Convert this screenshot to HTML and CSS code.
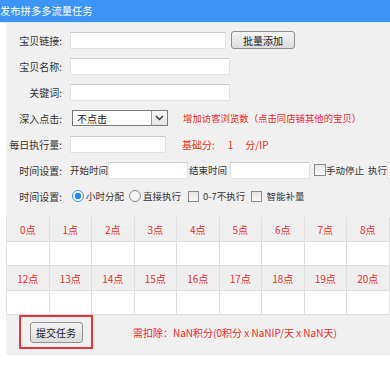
FILE: index.html
```html
<!DOCTYPE html>
<html lang="zh-CN">
<head>
    <meta charset="UTF-8">
    <meta name="viewport" content="width=device-width, initial-scale=1.0">
    <title>发布拼多多流量任务</title>
    <link rel="stylesheet" href="styles.css">
</head>
<body>
    <div class="page">
        <header class="title">发布拼多多流量任务</header>

        <div class="panel">
            <!-- 宝贝信息 -->
            <div class="row">
                <label class="lbl">宝贝链接:</label>
                <input type="text" class="txt w-link">
                <button type="button" class="btn btn-add">批量添加</button>
            </div>
            <div class="row">
                <label class="lbl">宝贝名称:</label>
                <input type="text" class="txt w-long">
            </div>
            <div class="row">
                <label class="lbl">关键词:</label>
                <input type="text" class="txt w-long">
            </div>

            <!-- 深入点击 -->
            <div class="row">
                <label class="lbl">深入点击:</label>
                <div class="select">
                    <span class="select-val">不点击</span>
                    <span class="select-arrow">
                        <svg width="9" height="6" viewBox="0 0 9 6"><path d="M1 1 L4.5 4.5 L8 1" fill="none" stroke="#333" stroke-width="1.4"/></svg>
                    </span>
                </div>
                <span class="red tip">增加访客浏览数（点击同店铺其他的宝贝）</span>
            </div>

            <!-- 执行量 -->
            <div class="row">
                <label class="lbl">每日执行量:</label>
                <input type="text" class="txt w-short">
                <span class="red score">基础分:<b>1</b>分/IP</span>
            </div>

            <!-- 时间 -->
            <div class="row">
                <label class="lbl">时间设置:</label>
                <span class="txt-in">开始时间</span>
                <input type="text" class="txt w-time">
                <span class="txt-in end-lbl">结束时间</span>
                <input type="text" class="txt w-time end">
                <span class="chk"></span>
                <span class="txt-in">手动停止</span>
                <span class="txt-in run">执行</span>
                <input type="text" class="txt w-run">
            </div>
            <div class="row">
                <label class="lbl">时间设置:</label>
                <span class="radio on first"></span><span class="opt">小时分配</span>
                <span class="radio"></span><span class="opt">直接执行</span>
                <span class="chk small"></span><span class="opt">0-7不执行</span>
                <span class="chk small"></span><span class="opt">智能补量</span>
            </div>

            <!-- 小时分配 -->
            <table class="hours">
                <tr class="head">
                    <td>0点</td><td>1点</td><td>2点</td><td>3点</td><td>4点</td><td>5点</td>
                    <td>6点</td><td>7点</td><td>8点</td><td>9点</td><td>10点</td><td>11点</td>
                </tr>
                <tr class="vals">
                    <td></td><td></td><td></td><td></td><td></td><td></td>
                    <td></td><td></td><td></td><td></td><td></td><td></td>
                </tr>
                <tr class="head">
                    <td>12点</td><td>13点</td><td>14点</td><td>15点</td><td>16点</td><td>17点</td>
                    <td>18点</td><td>19点</td><td>20点</td><td>21点</td><td>22点</td><td>23点</td>
                </tr>
                <tr class="vals">
                    <td></td><td></td><td></td><td></td><td></td><td></td>
                    <td></td><td></td><td></td><td></td><td></td><td></td>
                </tr>
            </table>

            <!-- 提交 -->
            <div class="submit-row">
                <div class="submit-box">
                    <button type="button" class="btn btn-submit">提交任务</button>
                </div>
                <span class="red cost">需扣除：NaN积分(0积分 x NaNIP/天 x NaN天)</span>
            </div>
        </div>
    </div>
</body>
</html>
```

FILE: styles.css
```css
body {
    margin: 0;
    padding: 0;
    background: #ffffff;
    font-family: "Microsoft YaHei", "Noto Sans CJK SC", sans-serif;
    font-size: 10px;
    color: #333;
    overflow: hidden;
}
.page {
    width: 390px;
    overflow: hidden;
}
.title {
    height: 22px;
    line-height: 21px;
    background-color: #3c95f6;
    border-bottom: 1px solid #d6e7f9;
    color: #ffffff;
    font-size: 10.3px;
    padding-left: 0;
    white-space: nowrap;
}
.panel {
    margin-left: 6px;
    background-color: #f0f0f0;
    padding: 4px 0 6px;
    white-space: nowrap;
}
.row {
    display: flex;
    align-items: center;
    height: 26px;
}
.lbl {
    width: 56px;
    text-align: right;
    margin-right: 8px;
    color: #333;
    flex: none;
}
.txt {
    box-sizing: border-box;
    height: 17px;
    border: 1px solid #e2e2e2;
    border-top-color: #c9c9c9;
    background: #ffffff;
    padding: 0 3px;
    font-size: 10px;
    flex: none;
}
.w-link { width: 156px; }
.w-long { width: 160px; }
.w-short { width: 96px; }
.w-time { width: 80px; }
.w-time.end { margin-left: 3px; }
.w-run { width: 20px; margin-left: 0; }
.btn {
    font-family: inherit;
    font-size: 10px;
    color: #222;
    border: 1px solid #8f8f8f;
    border-radius: 3px;
    background: linear-gradient(#f4f4f4, #dcdcdc);
    padding: 0;
    cursor: pointer;
}
.btn-add {
    width: 64px;
    height: 18px;
    margin-left: 5px;
}
.select {
    display: flex;
    align-items: center;
    box-sizing: border-box;
    width: 96px;
    height: 16px;
    margin-left: 2px;
    border: 1px solid #7a7a7a;
    background: #ffffff;
}
.select-val {
    flex: 1;
    padding-left: 4px;
    color: #111;
}
.select-arrow {
    box-sizing: border-box;
    width: 16px;
    height: 14px;
    border-left: 1px solid #9a9a9a;
    background: linear-gradient(#f6f6f6, #e4e4e4);
    display: flex;
    align-items: center;
    justify-content: center;
}
.red {
    color: #ee2a2a;
}
.tip {
    margin-left: 15px;
    font-size: 9.4px;
}
.score {
    margin-left: 16px;
}
.score b {
    font-weight: normal;
    margin: 0 12px 0 13px;
}
.txt-in, .opt {
    font-size: 9.5px;
}
.txt-in.end-lbl {
    margin-left: 1px;
}
.txt-in.run {
    margin-left: 4px;
}
.chk {
    box-sizing: border-box;
    width: 12px;
    height: 12px;
    margin: 0 0 0 4px;
    border: 1px solid #8a8a8a;
    background: linear-gradient(#e6e6e6, #f8f8f8);
    flex: none;
}
.chk.small {
    width: 11px;
    height: 11px;
    margin: 0 4px 0 7px;
}
.chk.small + .opt + .chk.small {
    margin-left: 6px;
}
.radio {
    box-sizing: border-box;
    width: 12px;
    height: 12px;
    margin: 0 2px 0 5px;
    border: 1px solid #8a8a8a;
    border-radius: 50%;
    background: #f4f4f4;
    flex: none;
}
.radio.first {
    margin-left: 2px;
}
.radio.on {
    border-color: #3d8fe0;
    background: radial-gradient(circle, #2a8ae8 0, #2a8ae8 3px, #ffffff 3.6px);
}
.hours {
    margin-top: 8px;
    border-collapse: collapse;
    table-layout: fixed;
    width: 498px;
}
.hours td {
    width: 41.5px;
    border: 1px solid #dedede;
    border-top: none;
    text-align: center;
    padding: 0;
}
.hours .head td {
    height: 24px;
    background: #efefef;
    color: #ee2a2a;
}
.hours .vals td {
    height: 23px;
    background: #ffffff;
}
.submit-row {
    display: flex;
    align-items: center;
    height: 34px;
}
.submit-box {
    box-sizing: border-box;
    width: 74px;
    height: 34px;
    margin-left: 13px;
    border: 2px solid #e8333b;
    display: flex;
    align-items: center;
    justify-content: center;
}
.btn-submit {
    width: 53px;
    height: 21px;
}
.cost {
    margin-left: 40px;
}
```
